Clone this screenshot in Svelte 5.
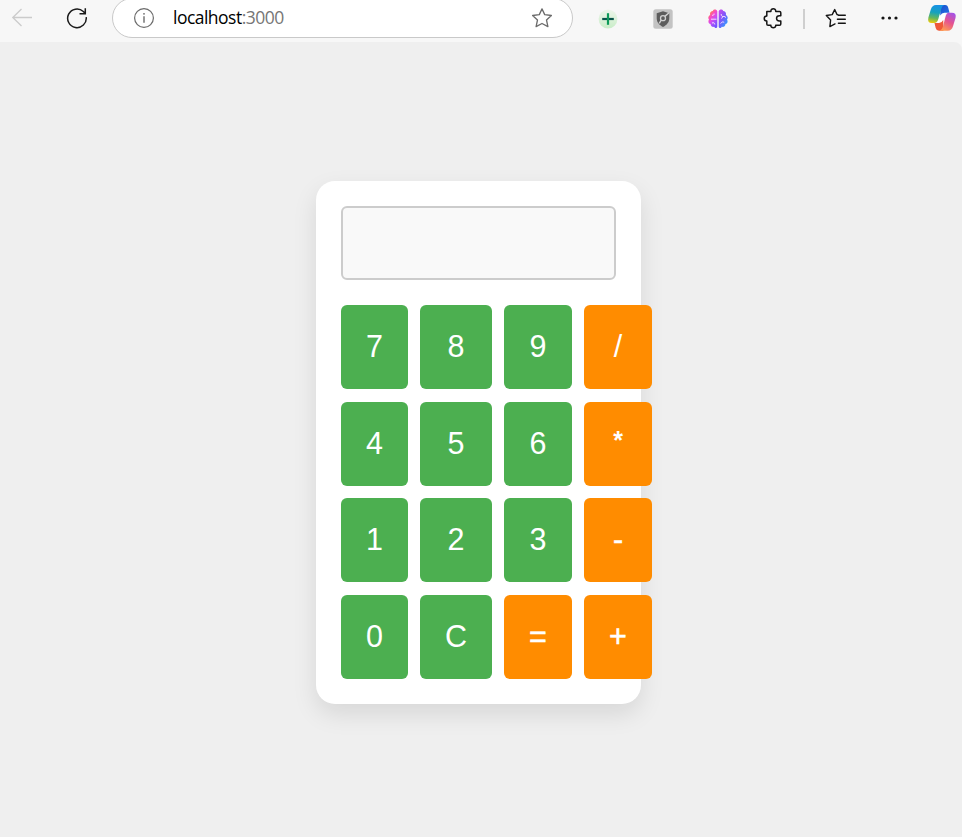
<script>
  const keys = ['7', '8', '9', '/', '4', '5', '6', '*', '1', '2', '3', '-', '0', 'C', '=', '+'];
  let display = $state('');

  function press(key) {
    if (key === 'C') {
      display = '';
    } else if (key !== '=') {
      display += key;
    }
  }
</script>

<div class="browser">
  <header class="toolbar">
    <svg class="back" width="22" height="20" viewBox="0 0 22 20" fill="none" stroke="#cbcbcb" stroke-width="1.3">
      <path d="M21 10.5H1.5M10.5 2L1.8 10.5L10.5 19" />
    </svg>
    <svg class="reload" width="22" height="22" viewBox="0 0 22 22" fill="none" stroke="#1b1b1b" stroke-width="1.5">
      <path d="M20.2 10.2A9.3 9.3 0 1 1 17.3 4.5L19.3 6.5M19.3 1.2V6.7H13.5" />
    </svg>

    <div class="address">
      <svg class="info" width="22" height="22" viewBox="0 0 22 22" fill="none" stroke="#6b6b6b" stroke-width="1.2">
        <circle cx="11" cy="11" r="9.4" />
        <path d="M11 9.3V15.8" stroke-width="1.4" />
        <circle cx="11" cy="6.8" r=".9" fill="#6b6b6b" stroke="none" />
      </svg>
      <span class="url">localhost<span class="port">:3000</span></span>
      <svg class="star" width="22" height="22" viewBox="0 0 22 22" fill="none" stroke="#6b6b6b" stroke-width="1.3" stroke-linejoin="round">
        <path d="M11 1.9L13.7 7.6L20.4 8.5L15.5 13L16.9 19.6L11 16.5L5.1 19.6L6.5 13L1.6 8.5L8.3 7.6Z" />
      </svg>
    </div>

    <svg class="add" width="20" height="20" viewBox="0 0 20 20">
      <defs>
        <linearGradient id="mint" x1="0" y1="0" x2="0" y2="1">
          <stop offset="0" stop-color="#edf5ea" />
          <stop offset="1" stop-color="#c9edc8" />
        </linearGradient>
      </defs>
      <circle cx="10" cy="10" r="9.4" fill="url(#mint)" />
      <path d="M4.2 10H15.8" stroke="#08554a" stroke-width="2.2" />
      <path d="M10 4.2V15.8" stroke="#0c9a58" stroke-width="2.2" />
    </svg>

    <svg class="shield" width="20" height="20" viewBox="0 0 20 20">
      <rect x=".3" y=".3" width="19.4" height="19.4" rx="2.5" fill="#c3c3c3" />
      <path d="M10 2.2L16.3 4.3V9C16.3 13.2 13.8 16 10 18C6.2 16 3.7 13.2 3.7 9V4.3Z" fill="#5c5c5c" />
      <circle cx="10" cy="9.2" r="2.5" fill="none" stroke="#d0d0d0" stroke-width="1.3" />
      <path d="M11.8 7.4L15.8 4M8.2 11L6.3 14.4" stroke="#d0d0d0" stroke-width="1.4" />
    </svg>

    <svg class="brain" width="20" height="20" viewBox="0 0 20 20">
      <defs>
        <linearGradient id="brain-l" x1="0" y1="0" x2=".6" y2="1">
          <stop offset=".1" stop-color="#ff981f" />
          <stop offset=".4" stop-color="#fb4bbd" />
          <stop offset=".65" stop-color="#cb4df6" />
          <stop offset="1" stop-color="#7553ff" />
        </linearGradient>
        <linearGradient id="brain-r" x1="0" y1="0" x2=".8" y2="1">
          <stop offset="0" stop-color="#d348ec" />
          <stop offset=".5" stop-color="#7b58fb" />
          <stop offset="1" stop-color="#25a5ff" />
        </linearGradient>
      </defs>
      <path fill="url(#brain-l)" d="M9.3 2.3C8.7.2 5.5 0 4.8 2.1C2.6 2.2 1.5 4.2 2.2 6C.2 6.8-.2 9.5 1 10.6C-.2 12.4.6 14.6 2.5 15C2.7 17.3 4.6 18.4 6.2 17.8C7.2 19.8 9 19.2 9.3 17.7Z" />
      <path fill="url(#brain-r)" d="M10.7 2.3C11.3.2 14.5 0 15.2 2.1C17.4 2.2 18.5 4.2 17.8 6C19.8 6.8 20.2 9.5 19 10.6C20.2 12.4 19.4 14.6 17.5 15C17.3 17.3 15.4 18.4 13.8 17.8C12.8 19.8 11 19.2 10.7 17.7Z" />
      <path fill="none" stroke="#f3ddff" stroke-width="1" d="M4 6.2C5.3 6.7 6.3 5.8 6.1 4.6M3 10.2H8.5M4 14C5.5 13.3 7 14 6.8 15.5M13.2 5C13 7.3 14.8 8 16 7.3L18 8.5M14.8 7.5L13.6 9.6M12.7 14.6C13.3 12.9 15 12.4 16.2 13.5" />
    </svg>

    <svg class="puzzle" width="20" height="22" viewBox="0 0 20 22" fill="none" stroke="#151515" stroke-width="1.5" stroke-linejoin="round">
      <path d="M3.8 4.4H7.9C7.5 .8 13.1 .8 12.7 4.4H16.5Q17.8 4.4 17.8 5.7V8.7H16.4C12.6 8.7 12.6 14 16.4 14H17.8V17Q17.8 18.3 16.5 18.3H12.7C13.1 21.5 7.5 21.5 7.9 18.3H5.1Q3.8 18.3 3.8 17V13.9C.4 13.9.4 8.9 3.8 8.9Z" />
    </svg>

    <i class="divider"></i>

    <svg class="favorites" width="22" height="22" viewBox="0 0 22 22" fill="none" stroke="#151515" stroke-width="1.4" stroke-linejoin="round" stroke-linecap="round">
      <path d="M13.2 7.9L12 7.5L9.7 2.6L7.2 7.6L1.3 8.5L5.6 13L4.9 19.6L10 16.9M13.4 8.2H20.3M12.4 12.2H20.3M13.4 16.2H20.3" />
    </svg>

    <svg class="more" width="18" height="4" viewBox="0 0 18 4" fill="#151515">
      <circle cx="2" cy="2" r="1.6" />
      <circle cx="8.5" cy="2" r="1.6" />
      <circle cx="15" cy="2" r="1.6" />
    </svg>

    <svg class="copilot" width="30" height="28" viewBox="0 0 30 28">
      <defs>
        <linearGradient id="cool" x1=".4" y1="0" x2=".25" y2="1">
          <stop offset="0" stop-color="#1791e4" />
          <stop offset=".4" stop-color="#16a2bd" />
          <stop offset=".72" stop-color="#67b75a" />
          <stop offset="1" stop-color="#f2cc09" />
        </linearGradient>
        <linearGradient id="warm" x1=".8" y1="0" x2=".3" y2="1">
          <stop offset="0" stop-color="#a353e8" />
          <stop offset=".5" stop-color="#e5538f" />
          <stop offset="1" stop-color="#ff9b52" />
        </linearGradient>
        <linearGradient id="navy" x1="0" y1="0" x2="1" y2="1">
          <stop offset="0" stop-color="#174fca" />
          <stop offset="1" stop-color="#2872e8" />
        </linearGradient>
      </defs>
      <path fill="#fff" d="M13.5 8H19L16 19.5H10Z" />
      <path fill="url(#navy)" d="M13 1H18.2Q20.7 1 21.3 4L22.5 8.8H17.5Q14.5 8.8 13.3 11.5Z" />
      <path fill="#ef5939" d="M7.5 19H12Q14.8 19 16.2 16L16.5 26.7H12Q9.3 26.7 8.7 24Z" />
      <path fill="url(#cool)" d="M9 1H17.2Q15 1.8 14 5.5L11.3 15Q10.2 19 7.2 19H4.8Q.1 19 1.4 13.5L3.8 5.5Q5.1 1 9 1Z" />
      <path fill="url(#warm)" d="M21.5 8.8H24.8Q29.8 8.8 28.5 14L26 22.3Q24.7 26.7 20.8 26.7H12.8Q15 26 16 22.5L18.5 12.8Q19.5 8.8 21.5 8.8Z" />
    </svg>
  </header>

  <main class="page">
    <section class="calculator">
      <div class="display">{display}</div>
      <div class="keys">
        {#each keys as key}
          <button
            class:operator={'/*-+='.includes(key)}
            class:sign={'-+='.includes(key)}
            class:times={key === '*'}
            onclick={() => press(key)}>{key}</button>
        {/each}
      </div>
    </section>
  </main>
</div>

<style>
  .browser {
    width: 962px;
    height: 837px;
    display: flex;
    flex-direction: column;
    overflow: hidden;
    background: #f7f7f7;
  }

  .toolbar {
    height: 42px;
    flex: none;
    display: flex;
    align-items: flex-start;
  }

  svg {
    display: block;
    flex: none;
  }

  .back { margin: 7px 0 0 11px; }
  .reload { margin: 7px 0 0 33px; }

  .address {
    box-sizing: border-box;
    width: 461px;
    height: 40px;
    margin: -2px 0 0 24px;
    padding: 0 19px 0 20px;
    display: flex;
    align-items: center;
    background: #fff;
    border: 1px solid #c9c9c9;
    border-radius: 20px;
  }

  .url {
    flex: 1;
    margin: -2px 0 0 18px;
    font: 17.5px/22px "Open Sans", "Noto Sans", sans-serif;
    letter-spacing: -0.52px;
    color: #000;
  }

  .port { color: #767676; }
  .add { margin: 9px 0 0 25px; }
  .shield { margin: 9px 0 0 35px; }
  .brain { margin: 9px 0 0 35px; }
  .puzzle { margin: 7px 0 0 35px; }

  .divider {
    width: 2px;
    height: 20px;
    margin: 9px 0 0 20px;
    background: #cfcfcf;
  }

  .favorites { margin: 7px 0 0 20px; }
  .more { margin: 16px 0 0 34px; }
  .copilot { margin: 4px 0 0 28px; }

  .page {
    flex: 1;
    display: flex;
    align-items: flex-start;
    padding: 139px 0 0 316px;
    background: #efefef;
    border-top-right-radius: 8px;
  }

  .calculator {
    box-sizing: border-box;
    width: 325px;
    height: 523px;
    padding: 25px;
    background: #fff;
    border-radius: 19px;
    box-shadow: 0 10px 25px rgba(0, 0, 0, 0.1);
  }

  .display {
    box-sizing: border-box;
    height: 74px;
    margin-bottom: 25px;
    padding: 12px;
    background: #f9f9f9;
    border: 2px solid #ccc;
    border-radius: 6px;
    font: 30px/46px "Liberation Sans", Arial, sans-serif;
    text-align: right;
    overflow: hidden;
  }

  .keys {
    display: grid;
    grid-template-columns: 67px 72px 68px 68px;
    grid-auto-rows: 84px;
    gap: 12.5px 12px;
  }

  button {
    padding: 0 0 1px;
    border: 0;
    border-radius: 6px;
    background: #4caf50;
    color: #fff;
    font: 30.5px "Liberation Sans", Arial, sans-serif;
  }

  .operator { background: #ff8c00; }
  .sign { -webkit-text-stroke: 0.5px #fff; }

  .times {
    padding-bottom: 7px;
    font-size: 25px;
    font-weight: bold;
  }
</style>
